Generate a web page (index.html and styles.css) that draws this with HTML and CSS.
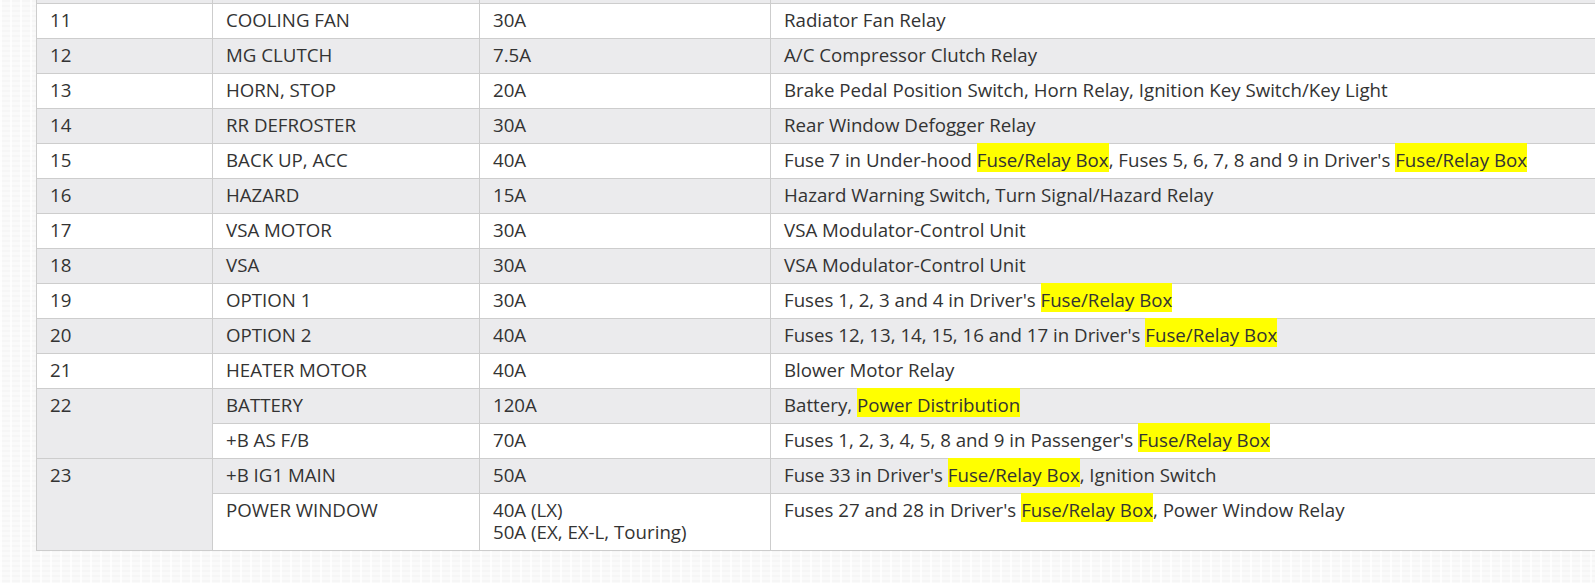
FILE: index.html
```html
<!DOCTYPE html>
<html lang="en">
<head>
<meta charset="utf-8">
<title>Under-hood Fuse/Relay Box</title>
<link rel="stylesheet" href="styles.css">
</head>
<body>
<div class="page">
  <table class="fuses">
    <colgroup>
      <col class="c-no">
      <col class="c-circuit">
      <col class="c-amp">
      <col class="c-desc">
    </colgroup>
    <tbody>
      <tr class="cut"><td></td><td></td><td></td><td></td></tr>
      <tr><td>11</td><td>COOLING FAN</td><td>30A</td><td>Radiator Fan Relay</td></tr>
      <tr><td>12</td><td>MG CLUTCH</td><td>7.5A</td><td>A/C Compressor Clutch Relay</td></tr>
      <tr><td>13</td><td>HORN, STOP</td><td>20A</td><td>Brake Pedal Position Switch, Horn Relay, Ignition Key Switch/Key Light</td></tr>
      <tr><td>14</td><td>RR DEFROSTER</td><td>30A</td><td>Rear Window Defogger Relay</td></tr>
      <tr><td>15</td><td>BACK UP, ACC</td><td>40A</td><td>Fuse 7 in Under-hood <span class="hl">Fuse/Relay Box</span>, Fuses 5, 6, 7, 8 and 9 in Driver's <span class="hl">Fuse/Relay Box</span></td></tr>
      <tr><td>16</td><td>HAZARD</td><td>15A</td><td>Hazard Warning Switch, Turn Signal/Hazard Relay</td></tr>
      <tr><td>17</td><td>VSA MOTOR</td><td>30A</td><td>VSA Modulator-Control Unit</td></tr>
      <tr><td>18</td><td>VSA</td><td>30A</td><td>VSA Modulator-Control Unit</td></tr>
      <tr><td>19</td><td>OPTION 1</td><td>30A</td><td>Fuses 1, 2, 3 and 4 in Driver's <span class="hl">Fuse/Relay Box</span></td></tr>
      <tr><td>20</td><td>OPTION 2</td><td>40A</td><td>Fuses 12, 13, 14, 15, 16 and 17 in Driver's <span class="hl">Fuse/Relay Box</span></td></tr>
      <tr><td>21</td><td>HEATER MOTOR</td><td>40A</td><td>Blower Motor Relay</td></tr>
      <tr><td rowspan="2">22</td><td>BATTERY</td><td>120A</td><td>Battery, <span class="hl">Power Distribution</span></td></tr>
      <tr><td>+B AS F/B</td><td>70A</td><td>Fuses 1, 2, 3, 4, 5, 8 and 9 in Passenger's <span class="hl">Fuse/Relay Box</span></td></tr>
      <tr><td rowspan="2">23</td><td>+B IG1 MAIN</td><td>50A</td><td>Fuse 33 in Driver's <span class="hl">Fuse/Relay Box</span>, Ignition Switch</td></tr>
      <tr><td>POWER WINDOW</td><td>40A (LX)<br>50A (EX, EX-L, Touring)</td><td>Fuses 27 and 28 in Driver's <span class="hl">Fuse/Relay Box</span>, Power Window Relay</td></tr>
    </tbody>
  </table>
</div>
</body>
</html>
```

FILE: styles.css
```css
html, body {
  margin: 0;
  padding: 0;
  height: 100%;
  overflow: hidden;
}

body {
  background-color: #fafafa;
  background-image:
    linear-gradient(90deg, rgba(255,255,255,0.8) 2px, transparent 2px),
    linear-gradient(rgba(0,0,0,0.015) 2px, transparent 2px);
  background-size: 10px 5px;
  font-family: "Open Sans", "Noto Sans", sans-serif;
  color: #333333;
}

.page {
  padding-left: 36px;
}

.fuses {
  border-collapse: collapse;
  table-layout: fixed;
  width: 1600px;
  background: #ffffff;
  font-size: 18.7px;
  line-height: 22px;
}

.c-no { width: 176px; }
.c-circuit { width: 267px; }
.c-amp { width: 291px; }
.c-desc { width: auto; }

.fuses td {
  border: 1px solid #cdcdcd;
  padding: 5px 13px 7px 13px;
  vertical-align: top;
  text-align: left;
  white-space: nowrap;
}

.fuses tr:nth-child(odd) td {
  background: #ebebed;
}

.fuses tr.cut td {
  border-top: none;
  height: 3px;
  padding: 0;
}

.hl {
  background: #ffff00;
  padding-top: 4px;
}
```
